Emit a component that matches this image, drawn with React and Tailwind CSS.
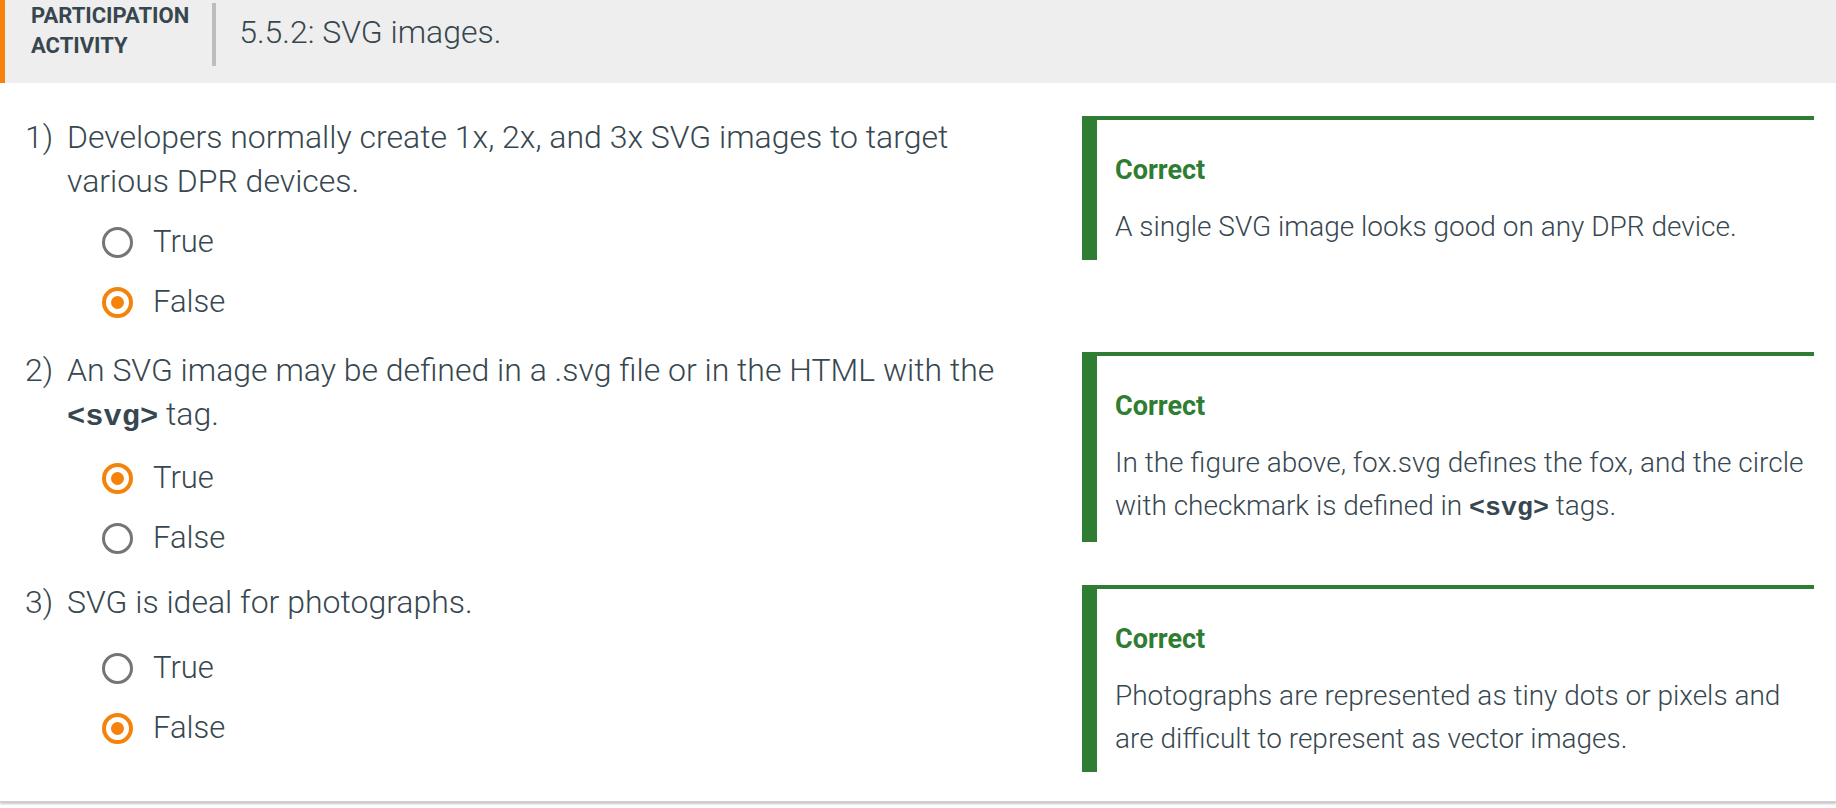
import React from 'react';

const questions = [
  {
    num: '1)',
    text: ['Developers normally create 1x, 2x, and 3x SVG images to target various DPR devices.'],
    selected: 'False',
    feedback: ['A single SVG image looks good on any DPR device.'],
    rowTop: 'mt-0',
    boxTop: 'mt-[1px]',
    optTop: 'mt-[9px]',
  },
  {
    num: '2)',
    text: ['An SVG image may be defined in a .svg file or in the HTML with the ', { code: '<svg>' }, ' tag.'],
    selected: 'True',
    feedback: ['In the figure above, fox.svg defines the fox, and the circle with checkmark is defined in ', { code: '<svg>' }, ' tags.'],
    rowTop: 'mt-[16px]',
    boxTop: 'mt-[4px]',
    optTop: 'mt-[9px]',
  },
  {
    num: '3)',
    text: ['SVG is ideal for photographs.'],
    selected: 'False',
    feedback: ['Photographs are represented as tiny dots or pixels and are difficult to represent as vector images.'],
    rowTop: 'mt-[12px]',
    boxTop: 'mt-[5px]',
    optTop: 'mt-[14px]',
  },
];

// mixed text + inline code pieces
const RichText = ({ parts }) =>
  parts.map((p, i) =>
    typeof p === 'string' ? (
      <React.Fragment key={i}>{p}</React.Fragment>
    ) : (
      <code key={i} className="font-['Liberation_Mono','DejaVu_Sans_Mono',monospace] font-bold text-[0.95em]">
        {p.code}
      </code>
    )
  );

const Radio = ({ checked }) =>
  checked ? (
    <span className="flex-none w-[31px] h-[31px] rounded-full border-[4px] border-[#f5820b] flex items-center justify-center">
      <span className="w-[13px] h-[13px] rounded-full bg-[#f5820b]" />
    </span>
  ) : (
    <span className="flex-none w-[31px] h-[31px] rounded-full border-[3.5px] border-[#757575]" />
  );

const Question = ({ q }) => (
  <div className={`flex items-start ${q.rowTop}`}>
    <div className="flex-1 pl-[25px] pr-[50px]">
      <div className="flex text-[32px] leading-[44px] font-light">
        <span className="w-[42px] flex-none">{q.num}</span>
        <p className="flex-1">
          <RichText parts={q.text} />
        </p>
      </div>
      <div className={`pl-[77px] ${q.optTop}`}>
        {['True', 'False'].map((opt) => (
          <label key={opt} className="flex items-center h-[60px] gap-[20px] text-[31px] font-light">
            <Radio checked={q.selected === opt} />
            <span>{opt}</span>
          </label>
        ))}
      </div>
    </div>
    <div className={`w-[732px] mr-[22px] ${q.boxTop} border-t-[4px] border-l-[15px] border-[#2e7d32] pl-[18px] pr-[4px] pt-[34px] pb-[12px]`}>
      <h4 className="text-[27px] font-bold text-[#2e7d32] leading-[32px]">Correct</h4>
      <p className="mt-[19px] text-[28px] font-light leading-[43px]">
        <RichText parts={q.feedback} />
      </p>
    </div>
  </div>
);

export default function App() {
  return (
    <div className="bg-white min-h-[808px] font-['Roboto','Liberation_Sans',sans-serif] text-[#37474f]">
      <div className="shadow-[0_2px_2px_rgba(0,0,0,0.22)] border-b border-[#d0d0d0] pb-[29px]">
        <header className="h-[83px] bg-[#eeeeee] border-l-[5px] border-[#f5820b] flex items-start pl-[26px]">
          <div className="mt-[1px] text-[22px] font-bold leading-[30px] uppercase">
            <div>Participation</div>
            <div>Activity</div>
          </div>
          <div className="ml-[23px] mt-[3px] w-[4px] h-[63px] bg-[#bdbdbd]" />
          <h2 className="ml-[23px] mt-[12px] text-[32px] font-light leading-[40px]">5.5.2: SVG images.</h2>
        </header>
        <div className="pt-[32px] flex flex-col">
          {questions.map((q) => (
            <Question key={q.num} q={q} />
          ))}
        </div>
      </div>
    </div>
  );
}
